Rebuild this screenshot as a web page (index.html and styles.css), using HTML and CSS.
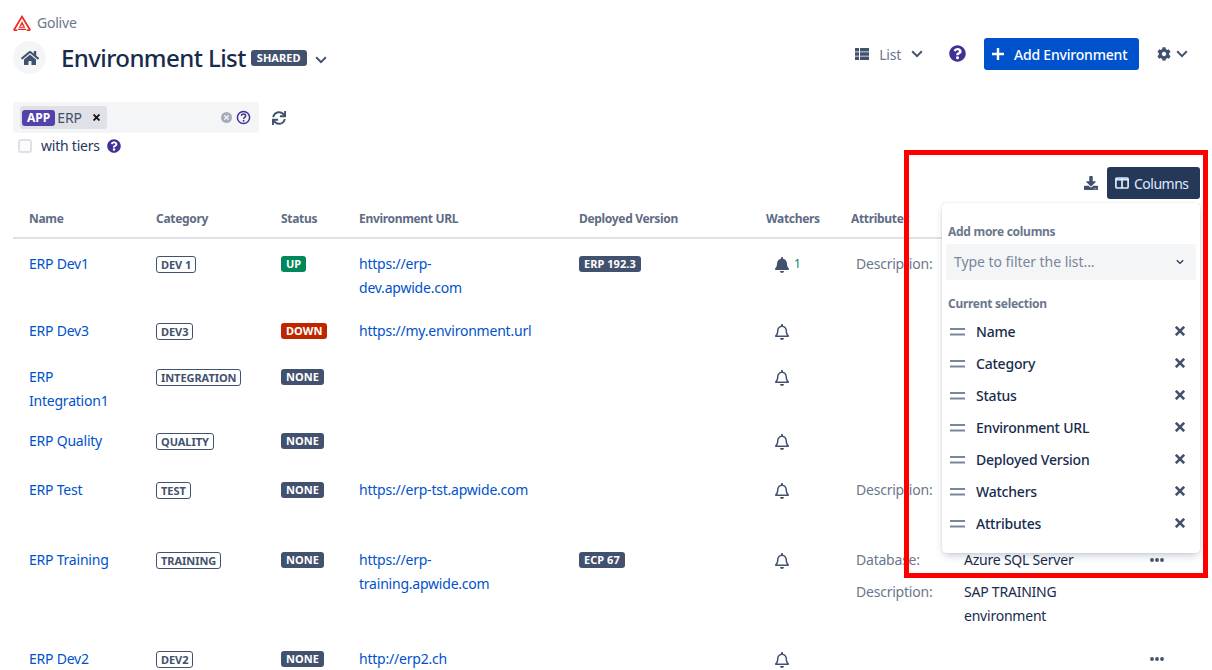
FILE: index.html
```html
<!DOCTYPE html>
<html lang="en">
<head>
<meta charset="utf-8">
<title>Environment List</title>
<link rel="stylesheet" href="styles.css">
</head>
<body>
<svg class="defs" width="0" height="0" aria-hidden="true">
  <symbol id="i-home" viewBox="0 0 576 512"><path d="M280.37 148.26L96 300.11V464a16 16 0 0 0 16 16l112.06-.29a16 16 0 0 0 15.92-16V368a16 16 0 0 1 16-16h64a16 16 0 0 1 16 16v95.64a16 16 0 0 0 16 16.05L464 480a16 16 0 0 0 16-16V300L295.67 148.26a12.19 12.19 0 0 0-15.3 0zM571.6 251.47L488 182.56V44.05a12 12 0 0 0-12-12h-56a12 12 0 0 0-12 12v72.61L318.47 43a48 48 0 0 0-61 0L4.34 251.47a12 12 0 0 0-1.6 16.9l25.5 31A12 12 0 0 0 45.15 301l235.22-193.74a12.19 12.19 0 0 1 15.3 0L530.9 301a12 12 0 0 0 16.9-1.6l25.5-31a12 12 0 0 0-1.7-16.93z"/></symbol>
  <symbol id="i-q" viewBox="0 0 512 512"><path d="M504 256c0 136.997-111.043 248-248 248S8 392.997 8 256C8 119.083 119.043 8 256 8s248 111.083 248 248zM262.655 90c-54.497 0-89.255 22.957-116.549 63.758-3.536 5.286-2.353 12.415 2.715 16.258l34.699 26.31c5.205 3.947 12.621 3.008 16.665-2.122 17.864-22.658 30.113-35.797 57.303-35.797 20.429 0 45.698 13.148 45.698 32.958 0 14.976-12.363 22.667-32.534 33.976C247.128 238.528 216 254.941 216 296v4c0 6.627 5.373 12 12 12h56c6.627 0 12-5.373 12-12v-1.333c0-28.462 83.186-29.647 83.186-106.667 0-58.002-60.165-102-116.531-102zM256 338c-25.365 0-46 20.635-46 46 0 25.364 20.635 46 46 46s46-20.636 46-46c0-25.365-20.635-46-46-46z"/></symbol>
  <symbol id="i-cog" viewBox="0 0 512 512"><path d="M487.4 315.7l-42.6-24.6c4.3-23.2 4.3-47 0-70.2l42.6-24.6c4.9-2.8 7.1-8.6 5.5-14-11.1-35.6-30-67.8-54.7-94.6-3.8-4.1-10-5.1-14.8-2.3L380.8 110c-17.9-15.4-38.5-27.3-60.8-35.1V25.8c0-5.6-3.9-10.5-9.4-11.7-36.7-8.2-74.3-7.8-109.2 0-5.5 1.2-9.4 6.1-9.4 11.7V75c-22.2 7.9-42.8 19.8-60.8 35.1L88.7 85.5c-4.9-2.8-11-1.9-14.8 2.3-24.7 26.7-43.6 58.9-54.7 94.6-1.7 5.4.6 11.2 5.5 14L67.3 221c-4.3 23.2-4.3 47 0 70.2l-42.6 24.6c-4.9 2.8-7.1 8.6-5.5 14 11.1 35.6 30 67.8 54.7 94.6 3.8 4.1 10 5.1 14.8 2.3l42.6-24.6c17.9 15.4 38.5 27.3 60.8 35.1v49.2c0 5.6 3.9 10.5 9.4 11.7 36.7 8.2 74.3 7.8 109.2 0 5.5-1.2 9.4-6.1 9.4-11.7v-49.2c22.2-7.9 42.8-19.8 60.8-35.1l42.6 24.6c4.9 2.8 11 1.9 14.8-2.3 24.7-26.7 43.6-58.9 54.7-94.6 1.5-5.5-.7-11.3-5.6-14.1zM256 336c-44.1 0-80-35.9-80-80s35.9-80 80-80 80 35.9 80 80-35.9 80-80 80z"/></symbol>
  <symbol id="i-sync" viewBox="0 0 512 512"><path d="M440.65 12.57l4 82.77A247.16 247.16 0 0 0 255.83 8C134.73 8 33.91 94.92 12.29 209.82A12 12 0 0 0 24.09 224h49.05a12 12 0 0 0 11.67-9.26 175.91 175.91 0 0 1 317-56.94l-101.46-4.86a12 12 0 0 0-12.57 12v47.41a12 12 0 0 0 12 12H500a12 12 0 0 0 12-12V12a12 12 0 0 0-12-12h-47.37a12 12 0 0 0-11.98 12.57zM255.83 432a175.61 175.61 0 0 1-146-77.8l101.8 4.87a12 12 0 0 0 12.57-12v-47.4a12 12 0 0 0-12-12H12a12 12 0 0 0-12 12V500a12 12 0 0 0 12 12h47.35a12 12 0 0 0 12-12.6l-4.15-82.57A247.17 247.17 0 0 0 255.83 504c121.11 0 221.93-86.92 243.55-201.82a12 12 0 0 0-11.8-14.18h-49.05a12 12 0 0 0-11.67 9.26A175.86 175.86 0 0 1 255.83 432z"/></symbol>
  <symbol id="i-bell" viewBox="0 0 448 512"><path d="M224 512c35.32 0 63.97-28.65 63.97-64H160.03c0 35.35 28.65 64 63.97 64zm215.39-149.71c-19.32-20.76-55.47-51.99-55.47-154.29 0-77.7-54.48-139.9-127.94-155.16V32c0-17.67-14.32-32-31.98-32s-31.98 14.33-31.98 32v20.84C118.56 68.1 64.08 130.3 64.08 208c0 102.3-36.15 133.53-55.47 154.29-6 6.45-8.66 14.16-8.61 21.71.11 16.4 12.98 32 32.1 32h383.8c19.12 0 32-15.6 32.1-32 .05-7.55-2.61-15.27-8.61-21.71z"/></symbol>
  <symbol id="i-bello" viewBox="0 0 448 512"><path d="M439.39 362.29c-19.32-20.76-55.47-51.99-55.47-154.29 0-77.7-54.48-139.9-127.94-155.16V32c0-17.67-14.32-32-31.98-32s-31.98 14.33-31.98 32v20.84C118.56 68.1 64.08 130.3 64.08 208c0 102.3-36.15 133.53-55.47 154.29-6 6.45-8.66 14.16-8.61 21.71.11 16.4 12.98 32 32.1 32h383.8c19.12 0 32-15.6 32.1-32 .05-7.55-2.61-15.27-8.61-21.71zM67.53 368c21.22-27.97 44.42-74.33 44.53-159.42 0-.2-.06-.38-.06-.58 0-61.86 50.14-112 112-112s112 50.14 112 112c0 .2-.06.38-.06.58.11 85.1 23.31 131.46 44.53 159.42H67.53zM224 512c35.32 0 63.97-28.65 63.97-64H160.03c0 35.35 28.65 64 63.97 64z"/></symbol>
  <symbol id="i-dl" viewBox="0 0 512 512"><path d="M216 0h80c13.3 0 24 10.7 24 24v168h87.7c17.8 0 26.7 21.5 14.1 34.1L269.7 378.3c-7.5 7.5-19.8 7.5-27.3 0L90.1 226.1c-12.6-12.6-3.7-34.1 14.1-34.1H192V24c0-13.3 10.7-24 24-24zm296 376v112c0 13.3-10.7 24-24 24H24c-13.3 0-24-10.7-24-24V376c0-13.3 10.7-24 24-24h146.7l49 49c20.1 20.1 52.5 20.1 72.6 0l49-49H488c13.3 0 24 10.7 24 24zm-124 88c0-11-9-20-20-20s-20 9-20 20 9 20 20 20 20-9 20-20zm64 0c0-11-9-20-20-20s-20 9-20 20 9 20 20 20 20-9 20-20z"/></symbol>
  <symbol id="i-chev" viewBox="0 0 12 8"><path d="M1.200 1.300 6 6.100l4.800-4.800" fill="none" stroke="currentColor" stroke-width="2"/></symbol>
  <symbol id="i-x" viewBox="0 0 10 10"><path d="M.8.800l8.400 8.400M9.200.800L.8 9.200" fill="none" stroke="currentColor" stroke-width="2.600"/></symbol>
  <symbol id="i-drag" viewBox="0 0 15 8"><path d="M0 1h15M0 6.500h15" fill="none" stroke="currentColor" stroke-width="1.800"/></symbol>
  <symbol id="i-dots" viewBox="0 0 14 4"><circle cx="2" cy="2" r="1.900"/><circle cx="7" cy="2" r="1.900"/><circle cx="12" cy="2" r="1.900"/></symbol>
  <symbol id="i-plus" viewBox="0 0 12 12"><path d="M6 0v12M0 6h12" fill="none" stroke="currentColor" stroke-width="2.400"/></symbol>
</svg>

<div class="page">
  <div class="crumb">
    <svg class="logo" viewBox="0 0 18 16" fill="none" stroke="#f0261e"><path d="M.8 15.200 9 1.600l8.200 13.600" stroke-width="1.700"/><path d="M.8 15.200h3.600M13.600 15.200h3.600" stroke-width="1.500"/><path d="M6.600 12.300 9 7.400l2.400 4.900zM5 14.400h8M7.300 9.800h3.400" stroke-width="1.100"/></svg>
    <span>Golive</span>
  </div>

  <header class="head">
    <div class="head-left">
      <span class="home"><svg class="ico home-ico"><use href="#i-home"/></svg></span>
      <h1 class="title">Environment List</h1>
      <span class="loz loz-grey">SHARED</span>
      <svg class="ico chev-title"><use href="#i-chev"/></svg>
    </div>
    <div class="head-right">
      <svg class="list-ico" viewBox="0 0 14 12"><path d="M0 0h4v3.400H0zM5 0h9v3.400H5zM0 4.300h4v3.400H0zM5 4.300h9v3.400H5zM0 8.600h4V12H0zM5 8.600h9V12H5z"/></svg>
      <span class="list-label">List</span>
      <svg class="ico chev-list"><use href="#i-chev"/></svg>
      <svg class="ico help-top"><use href="#i-q"/></svg>
      <button class="btn-add"><svg class="ico plus"><use href="#i-plus"/></svg><span class="btn-text">Add Environment</span></button>
      <svg class="ico cog"><use href="#i-cog"/></svg>
      <svg class="ico chev-cog"><use href="#i-chev"/></svg>
    </div>
  </header>

  <div class="filter-row">
    <div class="filter">
      <span class="tag"><span class="loz loz-purple">APP</span><span class="tag-text">ERP</span><svg class="ico tag-x"><use href="#i-x"/></svg></span>
      <span class="clear"><svg class="ico clear-x"><use href="#i-x"/></svg></span>
      <svg class="help-ring" viewBox="0 0 16 16"><circle cx="8" cy="8" r="6.500" fill="none" stroke="#403294" stroke-width="1.600"/><path d="M5.800 6.300C5.900 4.900 7 4.200 8.100 4.200c1.300 0 2.200.8 2.200 1.900 0 1.700-2.200 1.600-2.200 3.200" fill="none" stroke="#403294" stroke-width="1.600"/><circle cx="8.100" cy="11.400" r="1" fill="#403294"/></svg>
    </div>
    <svg class="ico sync"><use href="#i-sync"/></svg>
  </div>
  <div class="tiers">
    <span class="check"></span>
    <span class="tiers-label">with tiers</span>
    <svg class="ico help-tiers"><use href="#i-q"/></svg>
  </div>

  <div class="tools">
    <svg class="ico dl"><use href="#i-dl"/></svg>
    <button class="btn-col">
      <svg class="col-ico" viewBox="0 0 14 12" fill="none" stroke="#deebff" stroke-width="1.700"><rect x=".9" y="1" width="12.200" height="10" rx="1"/><path d="M7 1v10M1 2.600h12"/></svg>
      <span class="btn-text">Columns</span>
    </button>
  </div>

  <table class="grid">
    <colgroup>
      <col class="c-name"><col class="c-cat"><col class="c-status"><col class="c-url"><col class="c-ver"><col class="c-watch"><col class="c-attr"><col class="c-act">
    </colgroup>
    <thead>
      <tr>
        <th class="first">Name</th><th>Category</th><th>Status</th><th>Environment URL</th><th>Deployed Version</th><th>Watchers</th><th>Attributes</th><th></th>
      </tr>
    </thead>
    <tbody>
      <tr class="r1">
        <td class="first"><a>ERP Dev1</a></td>
        <td><span class="cat">DEV 1</span></td>
        <td><span class="loz loz-green">UP</span></td>
        <td><a>https://erp-<br>dev.apwide.com</a></td>
        <td><span class="loz loz-grey">ERP 192.3</span></td>
        <td class="watch"><svg class="ico bell"><use href="#i-bell"/></svg><span class="count">1</span></td>
        <td><div class="attr"><span class="attr-k">Description:</span><span class="attr-v"></span></div></td>
        <td></td>
      </tr>
      <tr class="r2">
        <td class="first"><a>ERP Dev3</a></td>
        <td><span class="cat">DEV3</span></td>
        <td><span class="loz loz-red">DOWN</span></td>
        <td><a>https://my.environment.url</a></td>
        <td></td>
        <td class="watch"><svg class="ico bell"><use href="#i-bello"/></svg></td>
        <td></td><td></td>
      </tr>
      <tr class="r3">
        <td class="first"><a>ERP Integration1</a></td>
        <td><span class="cat">INTEGRATION</span></td>
        <td><span class="loz loz-grey">NONE</span></td>
        <td></td><td></td>
        <td class="watch"><svg class="ico bell"><use href="#i-bello"/></svg></td>
        <td></td><td></td>
      </tr>
      <tr class="r4">
        <td class="first"><a>ERP Quality</a></td>
        <td><span class="cat">QUALITY</span></td>
        <td><span class="loz loz-grey">NONE</span></td>
        <td></td><td></td>
        <td class="watch"><svg class="ico bell"><use href="#i-bello"/></svg></td>
        <td></td><td></td>
      </tr>
      <tr class="r5">
        <td class="first"><a>ERP Test</a></td>
        <td><span class="cat">TEST</span></td>
        <td><span class="loz loz-grey">NONE</span></td>
        <td><a>https://erp-tst.apwide.com</a></td>
        <td></td>
        <td class="watch"><svg class="ico bell"><use href="#i-bello"/></svg></td>
        <td><div class="attr"><span class="attr-k">Description:</span><span class="attr-v"></span></div></td>
        <td></td>
      </tr>
      <tr class="r6">
        <td class="first"><a>ERP Training</a></td>
        <td><span class="cat">TRAINING</span></td>
        <td><span class="loz loz-grey">NONE</span></td>
        <td><a>https://erp-<br>training.apwide.com</a></td>
        <td><span class="loz loz-grey">ECP 67</span></td>
        <td class="watch"><svg class="ico bell"><use href="#i-bello"/></svg></td>
        <td>
          <div class="attr"><span class="attr-k">Database:</span><span class="attr-v">Azure SQL Server</span></div>
          <div class="attr attr-next"><span class="attr-k">Description:</span><span class="attr-v">SAP TRAINING environment</span></div>
        </td>
        <td class="act"><svg class="ico dots"><use href="#i-dots"/></svg></td>
      </tr>
      <tr class="r7">
        <td class="first"><a>ERP Dev2</a></td>
        <td><span class="cat">DEV2</span></td>
        <td><span class="loz loz-grey">NONE</span></td>
        <td><a>http://erp2.ch</a></td>
        <td></td>
        <td class="watch"><svg class="ico bell"><use href="#i-bello"/></svg></td>
        <td></td>
        <td class="act"><svg class="ico dots"><use href="#i-dots"/></svg></td>
      </tr>
    </tbody>
  </table>

  <aside class="pop">
    <div class="pop-title">Add more columns</div>
    <div class="pop-input"><span>Type to filter the list...</span><svg class="ico pop-chev"><use href="#i-chev"/></svg></div>
    <div class="pop-title pop-title2">Current selection</div>
    <ul class="pop-list">
      <li><svg class="ico drag"><use href="#i-drag"/></svg><span class="pop-name">Name</span><svg class="ico rm"><use href="#i-x"/></svg></li>
      <li><svg class="ico drag"><use href="#i-drag"/></svg><span class="pop-name">Category</span><svg class="ico rm"><use href="#i-x"/></svg></li>
      <li><svg class="ico drag"><use href="#i-drag"/></svg><span class="pop-name">Status</span><svg class="ico rm"><use href="#i-x"/></svg></li>
      <li><svg class="ico drag"><use href="#i-drag"/></svg><span class="pop-name">Environment URL</span><svg class="ico rm"><use href="#i-x"/></svg></li>
      <li><svg class="ico drag"><use href="#i-drag"/></svg><span class="pop-name">Deployed Version</span><svg class="ico rm"><use href="#i-x"/></svg></li>
      <li><svg class="ico drag"><use href="#i-drag"/></svg><span class="pop-name">Watchers</span><svg class="ico rm"><use href="#i-x"/></svg></li>
      <li><svg class="ico drag"><use href="#i-drag"/></svg><span class="pop-name">Attributes</span><svg class="ico rm"><use href="#i-x"/></svg></li>
    </ul>
  </aside>

  <div class="redbox"></div>
</div>
</body>
</html>
```

FILE: styles.css
```css
* { box-sizing: border-box; }
html, body { margin: 0; padding: 0; height: 670px; overflow: hidden; background: #fff; }
body { font-family: "Noto Sans", "Open Sans", sans-serif; font-size: 14px; line-height: 24px; letter-spacing: -.22px; color: #172b4d; }
.defs { position: absolute; }
.ico { display: block; fill: currentColor; flex: none; }
.page { position: relative; height: 670px; padding: 13px 12px 0 13px; }

.crumb { display: flex; align-items: center; height: 20px; color: #6b778c; font-size: 14px; }
.logo { width: 18px; height: 16px; margin-right: 6px; }

.head { display: flex; justify-content: space-between; align-items: center; height: 33px; margin-top: 8px; }
.head-left, .head-right { display: flex; align-items: center; }
.home { width: 33px; height: 33px; border-radius: 50%; background: #f4f5f7; display: flex; align-items: center; justify-content: center; }
.home-ico { width: 18px; height: 16px; color: #42526e; }
.title { margin: 0 0 0 15px; font-size: 24px; line-height: 32px; font-weight: 500; color: #172b4d; letter-spacing: -.58px; }
.chev-title { width: 12px; height: 8px; margin-left: 8px; margin-top: 5px; color: #42526e; }

.loz { display: inline-flex; align-items: center; height: 16px; padding: 0 5px; border-radius: 3px; font-size: 11px; line-height: 16px; font-weight: 700; letter-spacing: .05px; color: #fff; white-space: nowrap; vertical-align: top; }
.loz-grey { background: #42526e; }
.loz-green { background: #00875a; }
.loz-red { background: #bf2600; }
.loz-purple { background: #5243aa; font-size: 12px; padding: 0 5px; }
.head-left .loz { margin-left: 5px; padding: 0 6px; }

.head-right { padding-right: 12px; margin-bottom: 8px; }
.list-ico { width: 14px; height: 12px; fill: #42526e; }
.list-label { margin-left: 10px; padding-top: 2px; color: #6b778c; }
.chev-list { width: 12px; height: 8px; margin-left: 10px; color: #42526e; }
.help-top { width: 17px; height: 17px; margin-left: 26px; color: #403294; }
.btn-add { display: flex; align-items: center; height: 32px; width: 155px; margin-left: 18px; padding: 0 0 0 8px; border: 0; border-radius: 3px; background: #0052cc; color: #fff; font: 500 14px/24px "Noto Sans", sans-serif; letter-spacing: -.2px; }
.btn-text { padding-top: 2px; }
.plus { width: 12px; height: 12px; margin-right: 10px; }
.cog { width: 14px; height: 14px; margin-left: 18px; color: #42526e; }
.chev-cog { width: 12px; height: 8px; margin-left: 5px; color: #42526e; }

.filter-row { display: flex; align-items: center; margin-top: 28px; }
.filter { display: flex; align-items: center; width: 246px; height: 31px; padding: 0 7px; border-radius: 3px; background: #f4f5f7; position: relative; }
.tag { display: flex; align-items: center; width: 87px; height: 23px; padding-left: 2px; border-radius: 3px; background: #dfe1e6; }
.tag-text { margin-left: 2px; color: #42526e; }
.tag-x { width: 7px; height: 7px; margin-left: 11px; color: #111; }
.clear { width: 11px; height: 11px; border-radius: 50%; background: #a5adba; margin-left: auto; margin-right: 4px; display: flex; align-items: center; justify-content: center; }
.clear-x { width: 5px; height: 5px; color: #f4f5f7; }
.help-ring { width: 15px; height: 15px; margin-right: 1px; }
.sync { width: 14px; height: 14px; margin-left: 13px; color: #42526e; }

.tiers { display: flex; align-items: center; height: 24px; margin-top: 1px; padding-left: 5px; }
.check { width: 14px; height: 14px; border: 2px solid #dfe1e6; border-radius: 3px; background: #fafbfc; }
.tiers-label { margin-left: 9px; color: #253858; }
.help-tiers { width: 14px; height: 14px; margin-left: 7px; color: #403294; }

.tools { display: flex; justify-content: flex-end; align-items: center; gap: 9px; margin-top: 9px; }
.dl { width: 14px; height: 14px; color: #42526e; }
.btn-col { display: flex; align-items: center; justify-content: flex-start; gap: 5px; width: 93px; height: 32px; padding: 0 0 0 8px; border: 0; border-radius: 3px; background: #253858; color: #deebff; font: 400 14px/24px "Noto Sans", sans-serif; letter-spacing: -.5px; }
.col-ico { width: 14px; height: 12px; }

.grid { width: 1187px; table-layout: fixed; border-collapse: separate; border-spacing: 0; margin-top: 1px; }
.c-name { width: 143px; } .c-cat { width: 125px; } .c-status { width: 78px; } .c-url { width: 220px; }
.c-ver { width: 187px; } .c-watch { width: 85px; } .c-attr { width: 299px; } .c-act { width: 50px; }
th { height: 39px; padding: 0; border-bottom: 2px solid #dfe1e6; font-size: 12px; font-weight: 700; line-height: 16px; letter-spacing: -.32px; text-align: left; color: #5e6c84; vertical-align: middle; }
td { padding: 13px 0 0; vertical-align: top; }
.first { padding-left: 16px; }
td.first { padding-right: 36px; }
a { color: #0052cc; text-decoration: none; }
td a { display: block; }
.r1 { height: 67px; } .r2 { height: 46px; } .r3 { height: 64px; } .r4 { height: 49px; }
.r5 { height: 70px; } .r6 { height: 99px; } .r7 { height: 48px; }

.cat { display: inline-flex; align-items: center; height: 17px; padding: 0 4px; margin-top: 4px; border: 1px solid #42526e; border-radius: 3px; font-size: 11px; font-weight: 700; letter-spacing: -.05px; color: #42526e; white-space: nowrap; vertical-align: top; }
td > .loz { margin-top: 4px; }

td.watch { padding-left: 9px; }
.bell { display: inline-block; width: 14px; height: 16px; margin-top: 5px; color: #42526e; vertical-align: top; }
.count { margin-left: 5px; font-size: 12px; color: #00875a; vertical-align: top; }

.attr { display: grid; grid-template-columns: 108px 1fr; padding-left: 5px; padding-right: 60px; }
.attr-next { margin-top: 8px; }
.attr-k { color: #6b778c; }
.attr-v { color: #172b4d; }
.dots { width: 14px; height: 4px; margin-top: 10px; color: #42526e; }

.pop { position: absolute; left: 942px; top: 203px; width: 258px; height: 350px; padding: 19px 4px 0; border-radius: 4px; background: #fff; box-shadow: 0 0 1px rgba(9,30,66,.31), 0 4px 8px -2px rgba(9,30,66,.25); }
.pop-title { padding-left: 2px; font-size: 12px; line-height: 20px; font-weight: 700; letter-spacing: -.28px; color: #6b778c; }
.pop-title2 { margin-top: 14px; }
.pop-input { display: flex; align-items: center; justify-content: space-between; height: 36px; margin-top: 2px; padding: 0 12px 0 8px; border-radius: 3px; background: #f4f5f7; color: #7a869a; letter-spacing: -.05px; }
.pop-chev { width: 8px; height: 6px; color: #253858; }
.pop-list { list-style: none; margin: 2px 0 0; padding: 0; }
.pop-list li { display: flex; align-items: center; height: 32px; padding: 0 11px 0 4px; }
.drag { width: 15px; height: 8px; margin-bottom: 1px; color: #7a869a; }
.pop-name { margin-left: 11px; flex: 1; font-weight: 500; color: #172b4d; }
.rm { width: 10px; height: 10px; margin-bottom: 2px; color: #42526e; }

.redbox { position: absolute; left: 904px; top: 150px; width: 304px; height: 428px; border: 5px solid #f00; pointer-events: none; }
```
